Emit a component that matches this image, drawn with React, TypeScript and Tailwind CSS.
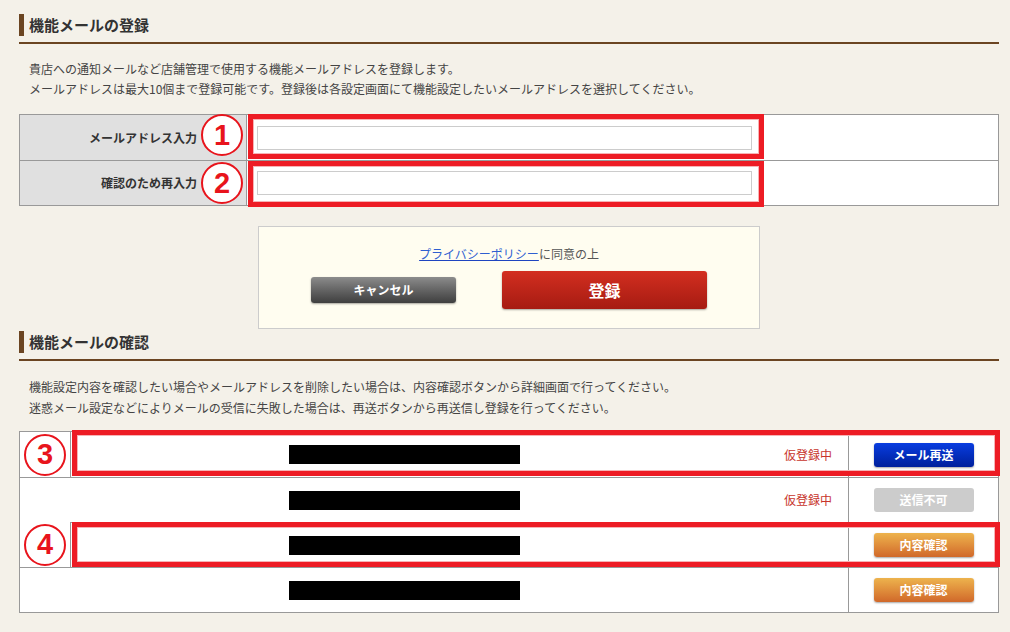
const jp = { fontFamily: '"Noto Sans CJK JP", "Noto Sans", sans-serif' };

function Heading({ title }: { title: string }) {
  return (
    <div className="flex items-center gap-[5px] border-b-2 border-[#6b4522] pb-[6px]">
      <div className="h-[22px] w-[5px] bg-[#6b4522]" />
      <h2 className="text-[15px] font-bold leading-[22px] text-[#333]">{title}</h2>
    </div>
  );
}

function Circle({ n }: { n: number }) {
  return (
    <div className="flex h-[42px] w-[42px] items-center justify-center rounded-full border-2 border-[#e8141c] bg-white">
      <span
        className="text-[29px] font-bold leading-none text-[#e8141c]"
        style={{ fontFamily: '"Liberation Sans", Arial, sans-serif' }}
      >
        {n}
      </span>
    </div>
  );
}

function RedBox({ className }: { className: string }) {
  return (
    <div
      className={`pointer-events-none absolute border-[5px] border-[#ed1c24] shadow-[inset_0_0_0_1px_#f6b3b5] ${className}`}
    />
  );
}

const rows = [
  { status: '仮登録中', btn: 'resend' },
  { status: '仮登録中', btn: 'disabled' },
  { status: '', btn: 'detail' },
  { status: '', btn: 'detail' },
];

function RowButton({ kind }: { kind: string }) {
  const base =
    'flex h-[24px] w-[100px] items-center justify-center rounded-[3px] text-[12px] font-bold text-white';
  if (kind === 'resend')
    return (
      <button className={`${base} bg-linear-to-b from-[#0a3de0] to-[#001f9c] shadow-[0_1px_2px_rgba(0,0,0,0.35)]`}>
        メール再送
      </button>
    );
  if (kind === 'disabled')
    return <button className={`${base} bg-[#cccccc] text-[#f4f4f4]`}>送信不可</button>;
  return (
    <button className={`${base} bg-linear-to-b from-[#edb34d] to-[#d0682a] shadow-[0_1px_2px_rgba(0,0,0,0.35)]`}>
      内容確認
    </button>
  );
}

export default function App() {
  return (
    <div className="min-h-[632px] w-[1010px] bg-[#f4f1e9] pt-[14px]" style={jp}>
      <div className="ml-[19px] w-[980px]">
        <Heading title="機能メールの登録" />
        <div className="mt-[15px] pl-[10px] text-[12px] leading-[20px] text-[#444]">
          <p>貴店への通知メールなど店舗管理で使用する機能メールアドレスを登録します。</p>
          <p>メールアドレスは最大10個まで登録可能です。登録後は各設定画面にて機能設定したいメールアドレスを選択してください。</p>
        </div>

        <div className="relative mt-[15px] border border-[#999] bg-white">
          {['メールアドレス入力', '確認のため再入力'].map((label, i) => (
            <div key={label} className={`flex h-[45px] ${i > 0 ? 'border-t border-[#999]' : ''}`}>
              <div className="flex w-[226px] items-center justify-end bg-[#e0e0e0] pr-[49px] text-[12px] font-bold text-[#333]">
                {label}
              </div>
              <div className="flex flex-1 items-center border-l border-[#999] pl-[10px]">
                <input className="h-[24px] w-[495px] border border-[#ccc] bg-white outline-none" />
              </div>
            </div>
          ))}
          <RedBox className="left-[228px] top-[-1px] h-[45px] w-[516px]" />
          <RedBox className="left-[228px] top-[46px] h-[46px] w-[516px]" />
          <div className="absolute left-[181px] top-[-1px]">
            <Circle n={1} />
          </div>
          <div className="absolute left-[181px] top-[47px]">
            <Circle n={2} />
          </div>
        </div>

        <div className="ml-[239px] mt-[20px] flex w-[502px] flex-col items-center border border-[#ccc] bg-[#fffdf0] pb-[19px] pt-[19px]">
          <p className="text-[12px] leading-[16px] text-[#555]">
            <a href="#" className="text-[#2f5fd0] underline decoration-[#1f44c0]">
              プライバシーポリシー
            </a>
            に同意の上
          </p>
          <div className="mt-[9px] flex items-center gap-[46px]">
            <button className="flex h-[26px] w-[145px] items-center justify-center rounded-[3px] bg-linear-to-b from-[#8c8c8c] to-[#3f3f3f] text-[12px] font-bold text-white shadow-[0_1px_2px_rgba(0,0,0,0.35)]">
              キャンセル
            </button>
            <button className="flex h-[38px] w-[205px] items-center justify-center rounded-[3px] bg-linear-to-b from-[#d32e20] to-[#a61b12] text-[16px] font-bold text-white shadow-[0_1px_2px_rgba(0,0,0,0.35)]">
              登録
            </button>
          </div>
        </div>

        <div className="mt-[2px]">
          <Heading title="機能メールの確認" />
        </div>
        <div className="mt-[15px] pl-[10px] text-[12px] leading-[21px] text-[#444]">
          <p>機能設定内容を確認したい場合やメールアドレスを削除したい場合は、内容確認ボタンから詳細画面で行ってください。</p>
          <p>迷惑メール設定などによりメールの受信に失敗した場合は、再送ボタンから再送信し登録を行ってください。</p>
        </div>

        <div className="relative mt-[13px] border border-[#999] bg-white">
          {rows.map((r, i) => (
            <div key={i} className={`flex h-[45px] ${i > 0 ? 'border-t border-[#999]' : ''}`}>
              <div className="flex w-[768px] items-center justify-center">
                <div className="ml-[1px] h-[19px] w-[231px] bg-black" />
              </div>
              <div className="flex w-[60px] items-center justify-end pr-[16px] text-[12px] whitespace-nowrap text-[#c8342c]">
                {r.status}
              </div>
              <div className="flex flex-1 items-center justify-center border-l border-[#999]">
                <RowButton kind={r.btn} />
              </div>
            </div>
          ))}
          <div className="absolute left-0 top-0 flex h-[45px] w-[51px] items-center justify-center border-r border-[#999] bg-white">
            <Circle n={3} />
          </div>
          <div className="absolute left-0 top-[90px] flex h-[45px] w-[51px] items-center justify-center border-r border-[#999] bg-white">
            <Circle n={4} />
          </div>
          <RedBox className="left-[52px] top-[-2px] h-[46px] w-[928px]" />
          <RedBox className="left-[52px] top-[90px] h-[45px] w-[928px]" />
        </div>
      </div>
    </div>
  );
}
